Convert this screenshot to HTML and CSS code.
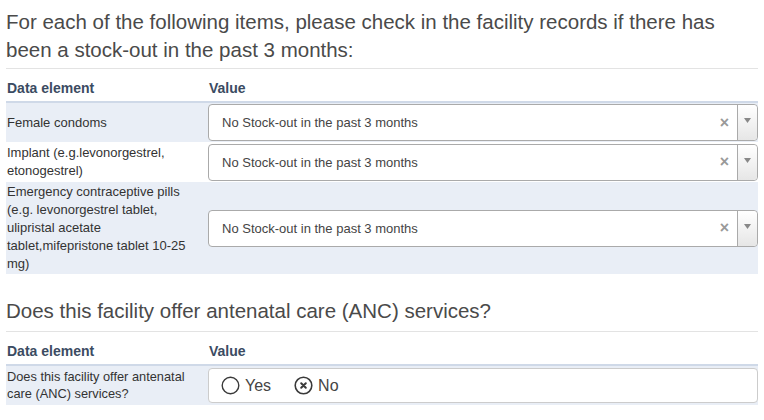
FILE: index.html
```html
<!DOCTYPE html>
<html>
<head>
<meta charset="utf-8">
<link rel="stylesheet" href="styles.css">
</head>
<body>
<div class="page">
  <section class="section">
    <h2 class="title">For each of the following items, please check in the facility records if there has been a stock-out in the past 3 months:</h2>
    <table class="grid">
      <thead>
        <tr><th class="c1">Data element</th><th>Value</th></tr>
      </thead>
      <tbody>
        <tr class="odd r1">
          <td class="label">Female condoms</td>
          <td class="val"><div class="select"><span class="sel-text">No Stock-out in the past 3 months</span><span class="clear">×</span><span class="arrow"><svg width="7" height="5" viewBox="0 0 7 5"><path d="M0 0H7L3.5 5Z" fill="#888"/></svg></span></div></td>
        </tr>
        <tr class="even r2">
          <td class="label">Implant (e.g.levonorgestrel, etonogestrel)</td>
          <td class="val"><div class="select"><span class="sel-text">No Stock-out in the past 3 months</span><span class="clear">×</span><span class="arrow"><svg width="7" height="5" viewBox="0 0 7 5"><path d="M0 0H7L3.5 5Z" fill="#888"/></svg></span></div></td>
        </tr>
        <tr class="odd r3">
          <td class="label">Emergency contraceptive pills (e.g. levonorgestrel tablet, ulipristal acetate tablet,mifepristone tablet 10-25 mg)</td>
          <td class="val"><div class="select"><span class="sel-text">No Stock-out in the past 3 months</span><span class="clear">×</span><span class="arrow"><svg width="7" height="5" viewBox="0 0 7 5"><path d="M0 0H7L3.5 5Z" fill="#888"/></svg></span></div></td>
        </tr>
      </tbody>
    </table>
  </section>
  <section class="section second">
    <h2 class="title">Does this facility offer antenatal care (ANC) services?</h2>
    <table class="grid">
      <thead>
        <tr><th class="c1">Data element</th><th>Value</th></tr>
      </thead>
      <tbody>
        <tr class="odd r4">
          <td class="label small">Does this facility offer antenatal care (ANC) services?</td>
          <td class="val"><div class="radios">
            <span class="opt"><svg class="rad" width="19" height="19" viewBox="0 0 19 19"><circle cx="9.5" cy="9.5" r="8.3" fill="none" stroke="#3a3a3a" stroke-width="1.4"/></svg>Yes</span>
            <span class="opt"><svg class="rad" width="19" height="19" viewBox="0 0 19 19"><circle cx="9.5" cy="9.5" r="8.3" fill="none" stroke="#3a3a3a" stroke-width="1.6"/><path d="M7.2 7.2L11.8 11.8M11.8 7.2L7.2 11.8" stroke="#3a3a3a" stroke-width="2" stroke-linecap="round"/></svg>No</span>
          </div></td>
        </tr>
      </tbody>
    </table>
  </section>
</div>
</body>
</html>
```
FILE: styles.css
```css
* { box-sizing: border-box; }
body {
  margin: 0;
  font-family: "Liberation Sans", Arial, sans-serif;
  color: #333;
  background: #fff;
}
.page { padding: 0 6px; width: 764px; }
.title {
  margin: 8px 0 0;
  padding-bottom: 4px;
  font-size: 20.5px;
  line-height: 28px;
  font-weight: normal;
  color: #4a4a4a;
  border-bottom: 1px solid #e3e3e3;
}
.second .title { margin-top: 23px; padding-bottom: 6px; }
.grid {
  width: 752px;
  border-collapse: collapse;
  table-layout: fixed;
}
.grid th {
  text-align: left;
  font-size: 14px;
  font-weight: bold;
  color: #3b4b62;
  height: 33px;
  padding: 6px 1px 0;
  border-bottom: 2px solid #cfd9e8;
}
.grid th.c1 { width: 202px; }
.grid td { padding: 1px 0; vertical-align: middle; }
.grid td.label {
  font-size: 13px;
  line-height: 18px;
  padding-left: 1px;
  padding-right: 4px;
  color: #333;
}
.grid td.label.small { font-size: 12.8px; line-height: 17px; padding-top: 0; }
.odd { background: #e9eef6; }
.even { background: #fff; }
.r1 td { height: 39px; }
.r2 td { height: 40px; }
.r3 td { height: 91px; }
.r4 td { height: 40px; }
.select {
  height: 37px;
  border: 1px solid #aaa;
  border-radius: 4px;
  background: #fff;
  display: flex;
  align-items: center;
  font-size: 13px;
  color: #444;
}
.sel-text { flex: 1; padding-left: 13px; }
.clear { color: #999; font-size: 16px; font-weight: bold; margin-right: 8px; }
.arrow {
  width: 20px;
  height: 100%;
  border-left: 1px solid #aaa;
  border-radius: 0 4px 4px 0;
  background: linear-gradient(#fff, #e6e6e6);
  display: flex;
  justify-content: center;
  padding-top: 13px;
}
.arrow svg { display: block; }
.radios {
  height: 35px;
  border: 1px solid #ccc;
  border-radius: 4px;
  background: #fff;
  display: flex;
  align-items: center;
  padding-left: 12px;
  gap: 23px;
  font-size: 16px;
  color: #444;
}
.opt { display: flex; align-items: center; gap: 5px; }
.rad { display: block; }
```
